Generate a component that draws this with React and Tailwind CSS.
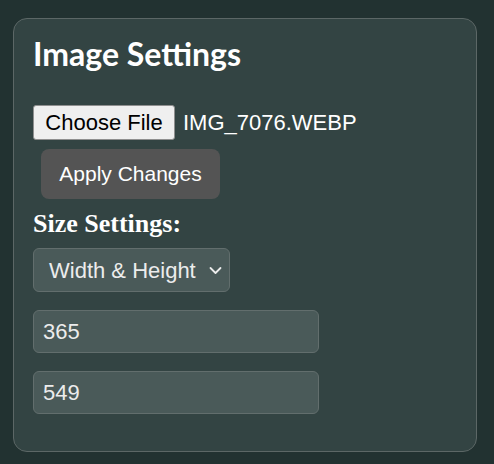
export default function App() {
  return (
    <div className="min-h-[464px] w-full bg-[#223231] pt-[18px] pl-[13px]" style={{ fontFamily: '"Liberation Sans", Arial, sans-serif' }}>
      <div className="w-[464px] h-[434px] rounded-[14px] border border-[#5c6766] bg-[#334443] pt-4 px-[19px]">
        <h2 className="text-[32px] font-bold leading-[37px] text-white" style={{ fontFamily: 'Lato, sans-serif' }}>
          Image Settings
        </h2>
        <div className="mt-[33px] flex items-center h-[35px]">
          <div className="w-[142px] h-[35px] flex items-center justify-center bg-[#efefef] border border-[#8f8f8f] rounded-[3px] text-[22px] text-black">
            Choose File
          </div>
          <span className="ml-[8px] text-[22px] text-white">IMG_7076.WEBP</span>
        </div>
        <button className="mt-[9px] ml-[8px] w-[179px] h-[50px] rounded-[8px] bg-[#545454] text-white text-[21px] flex items-center justify-center">
          Apply Changes
        </button>
        <h3 className="mt-[10px] text-[26px] font-bold leading-[30px] text-white" style={{ fontFamily: '"Liberation Serif", "Times New Roman", serif' }}>
          Size Settings:
        </h3>
        <div className="mt-[9px] w-[197px] h-[44px] rounded-[6px] border border-[#626e6d] bg-[#4a5a59] flex items-center justify-between pl-[15px] pr-[7px] text-[22px] text-[#ececec]">
          <span>Width &amp; Height</span>
          <svg width="13" height="9" viewBox="0 0 13 9" fill="none" stroke="#ececec" strokeWidth="1.8" strokeLinecap="round" strokeLinejoin="round">
            <path d="M1.5 2 L6.5 7 L11.5 2" />
          </svg>
        </div>
        <div className="mt-[18px] w-[286px] h-[43px] rounded-[6px] border border-[#626e6d] bg-[#4a5a59] flex items-center pl-[9px] text-[22px] text-[#ececec]">
          365
        </div>
        <div className="mt-[18px] w-[286px] h-[43px] rounded-[6px] border border-[#626e6d] bg-[#4a5a59] flex items-center pl-[9px] text-[22px] text-[#ececec]">
          549
        </div>
      </div>
    </div>
  );
}
